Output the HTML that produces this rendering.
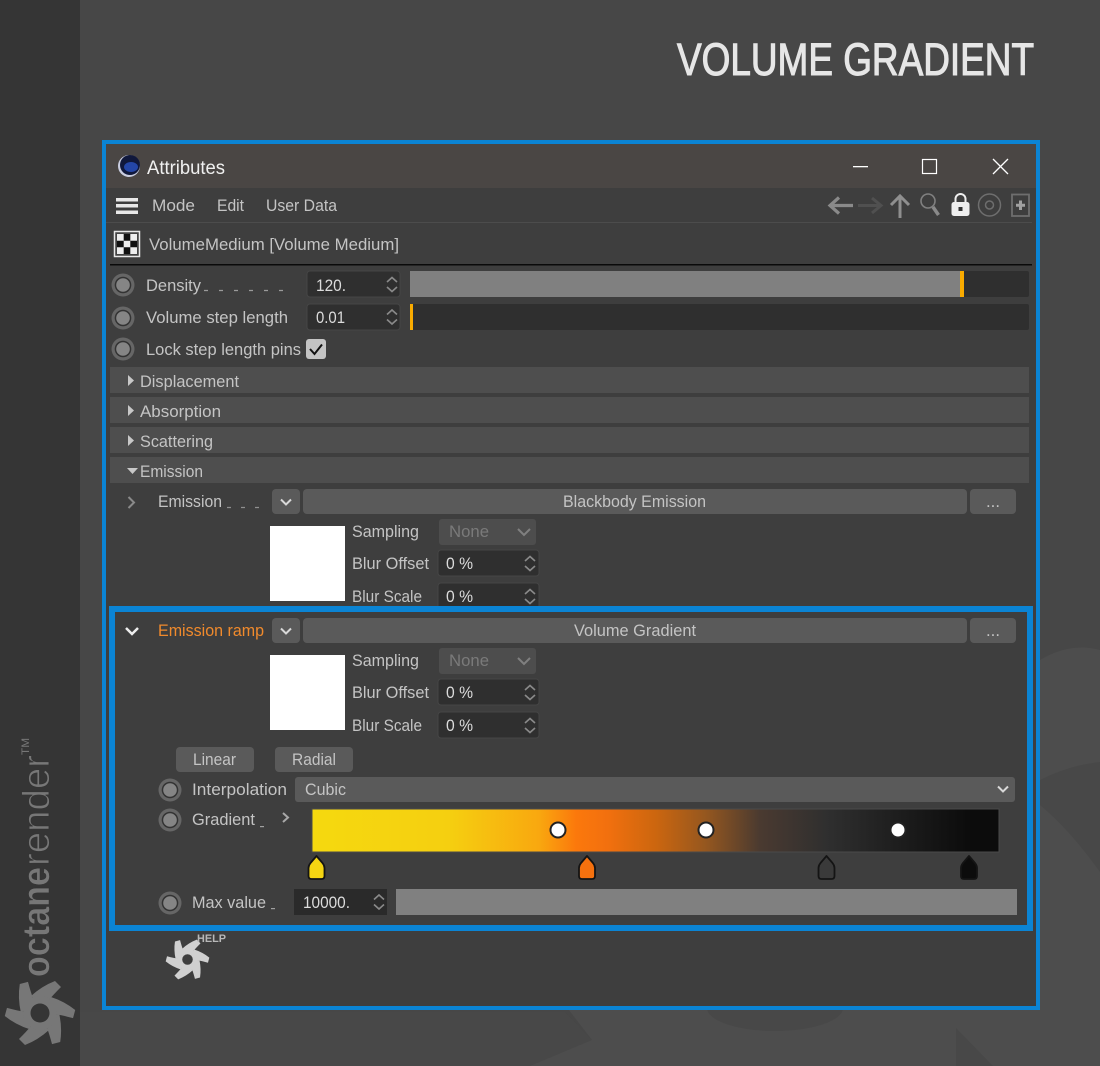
<!DOCTYPE html>
<html><head><meta charset="utf-8"><title>Volume Gradient</title>
<style>
html,body{margin:0;padding:0;background:#484848}
svg{display:block;font-family:"Liberation Sans",sans-serif}
.t{font-size:17px;fill:#c4c4c4}
.w{font-size:17px;fill:#dcdcdc}
</style></head><body>
<svg xmlns="http://www.w3.org/2000/svg" width="1100" height="1066" viewBox="0 0 1100 1066">
<defs>
<linearGradient id="g" x1="0" x2="1" y1="0" y2="0">
<stop offset="0" stop-color="#f5d90f"/><stop offset=".2" stop-color="#f5cf10"/><stop offset=".33" stop-color="#f9a80f"/><stop offset=".385" stop-color="#fb780c"/><stop offset=".43" stop-color="#f2700e"/><stop offset=".5" stop-color="#cc660f"/><stop offset=".573" stop-color="#95571f"/><stop offset=".652" stop-color="#4a3a30"/><stop offset=".75" stop-color="#2f2f2f"/><stop offset=".955" stop-color="#0c0c0c"/><stop offset="1" stop-color="#0c0c0c"/>
</linearGradient>
<g id="pin"><circle r="11.5" fill="#666"/><circle r="8.3" fill="#333"/><circle r="6.800" fill="#858585"/></g>
<g id="spin" fill="none" stroke="#8a8a8a" stroke-width="1.600"><path d="M-5 -2.500L0 -7L5 -2.500M-5 2.500L0 7L5 2.500"/></g>
<path id="chev" d="M-5 -2.500L0 2.500L5 -2.500" fill="none" stroke="#d8d8d8" stroke-width="2"/>
<path id="blade" d="M-9 -17Q2 -27 15 -32L21 -26Q13 -18 9 -13L0 -10Z"/>
<g id="logo"><use href="#blade"/><use href="#blade" transform="rotate(60)"/><use href="#blade" transform="rotate(120)"/><use href="#blade" transform="rotate(180)"/><use href="#blade" transform="rotate(240)"/><use href="#blade" transform="rotate(300)"/><circle r="17"/></g>
<path id="hd" d="M0 0L6 7Q8 9.500 8 12V20Q8 23 5 23H-5Q-8 23-8 20V12Q-8 9.500-6 7Z" stroke-linejoin="round"/>
</defs>

<!-- background -->
<rect width="1100" height="1066" fill="#474747"/>
<path d="M1040 660Q1070 642 1100 650V1066H80V1040H530L592 1040L565 1005H1040Z" fill="#4d4d4d"/>
<path d="M80 1012H565L592 1040L530 1066H80Z" fill="#484848"/>
<ellipse cx="775" cy="1008" rx="68" ry="23" fill="#484848"/>
<path d="M956 1028L993 1066H956Z" fill="#484848"/>
<path d="M1040 780Q1070 765 1100 762V872Q1070 830 1040 805Z" fill="#484848"/>
<rect width="80" height="1066" fill="#353535"/>

<!-- side logo -->
<g transform="translate(49 977) rotate(-90)">
<text font-size="38" font-weight="700" fill="#777" stroke="#353535" stroke-width=".5" textLength="110" lengthAdjust="spacingAndGlyphs">octane</text>
<text x="111" font-size="38" fill="#777" stroke="#353535" stroke-width=".9" textLength="111" lengthAdjust="spacingAndGlyphs">render</text>
<text x="222" y="-20" font-size="11" fill="#777" textLength="17" lengthAdjust="spacingAndGlyphs">TM</text>
</g>
<g transform="translate(40 1013)" fill="#777"><use href="#logo"/><circle r="9.500" fill="#353535"/></g>

<text x="677" y="75" font-size="45" fill="#e6e6e6" stroke="#e6e6e6" stroke-width="1.100" textLength="357" lengthAdjust="spacingAndGlyphs">VOLUME GRADIENT</text>

<!-- main frame -->
<rect x="102" y="140" width="938" height="870" fill="#0b84d4"/>
<rect x="106" y="144" width="930" height="862" fill="#3e3e3e"/>
<rect x="106" y="144" width="930" height="44" fill="#4a4644"/>
<rect x="106" y="222" width="926" height="1" fill="#4c4c4c"/>
<rect x="110" y="264" width="922" height="1.500" fill="#0a0a0a"/>

<!-- title bar -->
<circle cx="129" cy="166" r="11" fill="#c9cde0"/>
<circle cx="130" cy="165" r="10" fill="#10183c"/>
<ellipse cx="131" cy="167" rx="7" ry="5" fill="#2446a8"/>
<text x="147" y="174" font-size="19" fill="#f0f0f0" textLength="78" lengthAdjust="spacingAndGlyphs">Attributes</text>
<rect x="853" y="166" width="15" height="1.300" fill="#fff"/>
<rect x="922.500" y="159.500" width="14" height="14" fill="none" stroke="#fff" stroke-width="1.200"/>
<path d="M993 159L1008 174M1008 159L993 174" stroke="#fff" stroke-width="1.300" fill="none"/>

<!-- menu -->
<rect x="116" y="198" width="22" height="3.500" fill="#e8e8e8"/><rect x="116" y="204" width="22" height="3.500" fill="#e8e8e8"/><rect x="116" y="210.500" width="22" height="3.500" fill="#e8e8e8"/>
<text class="t" x="152" y="211" textLength="43" lengthAdjust="spacingAndGlyphs">Mode</text>
<text class="t" x="217" y="211" textLength="27" lengthAdjust="spacingAndGlyphs">Edit</text>
<text class="t" x="266" y="211" textLength="71" lengthAdjust="spacingAndGlyphs">User Data</text>

<!-- toolbar icons -->
<path d="M853 205.500H830M839 197.500L830 205.500L839 213.500" fill="none" stroke="#8a8a8a" stroke-width="3.200"/>
<path d="M858 205.500H880M872 198L881 205.500L872 213" fill="none" stroke="#505050" stroke-width="3"/>
<path d="M900 218V196M891 205L900 196L909 205" fill="none" stroke="#8f8f8f" stroke-width="3"/>
<circle cx="928" cy="201" r="7" fill="none" stroke="#808080" stroke-width="1.600"/><path d="M933 207L938.500 215" stroke="#8a8a8a" stroke-width="3.500"/>
<path d="M955.500 203V199A5 5 0 0 1 965.500 199V203" fill="none" stroke="#eee" stroke-width="2"/><rect x="951.500" y="202" width="18" height="14" rx="2.500" fill="#eee"/><rect x="958.500" y="207" width="4" height="4" fill="#333"/>
<circle cx="989.500" cy="205" r="11" fill="none" stroke="#6e6e6e" stroke-width="1.500"/><circle cx="989.500" cy="205" r="4" fill="none" stroke="#6e6e6e" stroke-width="1.500"/>
<rect x="1012" y="194.500" width="17" height="21.500" fill="none" stroke="#6e6e6e" stroke-width="1.800"/><path d="M1020.500 200.500V210M1016 205.300H1025" stroke="#a0a0a0" stroke-width="3"/>

<!-- object row -->
<rect x="114.500" y="231.500" width="25" height="25" fill="#444" stroke="#e8e8e8" stroke-width="1.500"/><rect x="117" y="234" width="20" height="20" fill="#eee"/>
<path d="M123.700 234h6.600v6.700h-6.600zM117 240.700h6.700v6.600h-6.700zM130.300 240.700h6.700v6.600h-6.700zM123.700 247.300h6.600v6.700h-6.600z" fill="#111"/>
<text class="t" x="149" y="250" textLength="250" lengthAdjust="spacingAndGlyphs">VolumeMedium [Volume Medium]</text>

<!-- density etc -->
<use href="#pin" x="123" y="285"/><use href="#pin" x="123" y="318"/><use href="#pin" x="123" y="349"/>
<text class="t" x="146" y="291" textLength="55" lengthAdjust="spacingAndGlyphs">Density</text>
<path d="M204 290.500H294" stroke="#9a9a9a" stroke-width="1.200" stroke-dasharray="4 11"/>
<text class="t" x="146" y="323" textLength="142" lengthAdjust="spacingAndGlyphs">Volume step length</text>
<text class="t" x="146" y="355" textLength="155" lengthAdjust="spacingAndGlyphs">Lock step length pins</text>
<rect x="307" y="271" width="93" height="26" rx="3" fill="#2f2f2f" stroke="#464646"/>
<rect x="307" y="304" width="93" height="26" rx="3" fill="#2f2f2f" stroke="#464646"/>
<text class="w" x="316" y="291" textLength="30" lengthAdjust="spacingAndGlyphs">120.</text>
<text class="w" x="316" y="323" textLength="29" lengthAdjust="spacingAndGlyphs">0.01</text>
<use href="#spin" x="392" y="284.500"/><use href="#spin" x="392" y="317"/>
<rect x="410" y="271" width="619" height="26" rx="2" fill="#2f2f2f"/><rect x="410" y="271" width="550" height="26" fill="#808080"/><rect x="960" y="271" width="4" height="26" fill="#f9ab00"/>
<rect x="410" y="304" width="619" height="26" rx="2" fill="#2f2f2f"/><rect x="410" y="304" width="3" height="26" fill="#f9ab00"/>
<rect x="306" y="339" width="20" height="20" rx="3" fill="#c4c4c4"/><path d="M310 349L314.500 354L322 344.500" fill="none" stroke="#111" stroke-width="2"/>

<!-- sections -->
<rect x="110" y="367" width="919" height="26" fill="#4e4e4e"/><rect x="110" y="397" width="919" height="26" fill="#4e4e4e"/><rect x="110" y="427" width="919" height="26" fill="#4e4e4e"/><rect x="110" y="457" width="919" height="26" fill="#4e4e4e"/>
<path d="M128 375L134 380.500L128 386ZM128 405L134 410.500L128 416ZM128 435L134 440.500L128 446Z" fill="#c8c8c8"/>
<path d="M127 468H138L132.500 474Z" fill="#c8c8c8"/>
<text class="t" x="140" y="387" textLength="99" lengthAdjust="spacingAndGlyphs">Displacement</text>
<text class="t" x="140" y="417" textLength="81" lengthAdjust="spacingAndGlyphs">Absorption</text>
<text class="t" x="140" y="447" textLength="73" lengthAdjust="spacingAndGlyphs">Scattering</text>
<text class="t" x="140" y="477" textLength="63" lengthAdjust="spacingAndGlyphs">Emission</text>

<!-- emission -->
<path d="M128.500 497L134 502.500L128.500 508" fill="none" stroke="#8a8a8a" stroke-width="2"/>
<text class="t" x="158" y="507" textLength="64" lengthAdjust="spacingAndGlyphs">Emission</text>
<path d="M227 507.500H262" stroke="#8f8f8f" stroke-width="1.200" stroke-dasharray="4 10"/>
<rect x="272" y="489" width="28" height="25" rx="4" fill="#5a5a5a"/><use href="#chev" x="286" y="502"/>
<rect x="303" y="489" width="664" height="25" rx="4" fill="#5a5a5a"/>
<rect x="970" y="489" width="46" height="25" rx="4" fill="#5a5a5a"/>
<text class="t" x="563" y="507" textLength="143" lengthAdjust="spacingAndGlyphs">Blackbody Emission</text>
<text class="t" x="986" y="507" textLength="14" lengthAdjust="spacingAndGlyphs">...</text>
<rect x="270" y="526" width="75" height="75" fill="#fff"/>
<text class="t" x="352" y="537" textLength="67" lengthAdjust="spacingAndGlyphs">Sampling</text>
<rect x="439" y="519" width="97" height="26" rx="3" fill="#4d4d4d"/>
<text class="t" x="449" y="537" style="fill:#7a7a7a" textLength="40" lengthAdjust="spacingAndGlyphs">None</text>
<path d="M518 529L524 535L530 529" fill="none" stroke="#808080" stroke-width="2"/>
<text class="t" x="352" y="569" textLength="77" lengthAdjust="spacingAndGlyphs">Blur Offset</text>
<rect x="438" y="550" width="101" height="26" rx="3" fill="#2f2f2f" stroke="#464646"/>
<text class="w" x="446" y="569" textLength="27" lengthAdjust="spacingAndGlyphs">0 %</text>
<use href="#spin" x="530" y="563.500"/>
<text class="t" x="352" y="602" textLength="70" lengthAdjust="spacingAndGlyphs">Blur Scale</text>
<rect x="438" y="583" width="101" height="26" rx="3" fill="#2f2f2f" stroke="#464646"/>
<text class="w" x="446" y="602" textLength="27" lengthAdjust="spacingAndGlyphs">0 %</text>
<use href="#spin" x="530" y="596.500"/>

<!-- inner frame -->
<rect x="112" y="609" width="918" height="319" fill="#3e3e3e" stroke="#0b84d4" stroke-width="6"/>

<!-- ramp -->
<path d="M126 628L132 634L138 628" fill="none" stroke="#eee" stroke-width="2.500"/>
<text x="158" y="636" font-size="17" fill="#f08a2c" textLength="106" lengthAdjust="spacingAndGlyphs">Emission ramp</text>
<rect x="272" y="618" width="28" height="25" rx="4" fill="#5a5a5a"/><use href="#chev" x="286" y="631"/>
<rect x="303" y="618" width="664" height="25" rx="4" fill="#5a5a5a"/>
<rect x="970" y="618" width="46" height="25" rx="4" fill="#5a5a5a"/>
<text class="t" x="574" y="636" textLength="122" lengthAdjust="spacingAndGlyphs">Volume Gradient</text>
<text class="t" x="986" y="636" textLength="14" lengthAdjust="spacingAndGlyphs">...</text>
<rect x="270" y="655" width="75" height="75" fill="#fff"/>
<text class="t" x="352" y="666" textLength="67" lengthAdjust="spacingAndGlyphs">Sampling</text>
<rect x="439" y="648" width="97" height="26" rx="3" fill="#4d4d4d"/>
<text class="t" x="449" y="666" style="fill:#7a7a7a" textLength="40" lengthAdjust="spacingAndGlyphs">None</text>
<path d="M518 658L524 664L530 658" fill="none" stroke="#808080" stroke-width="2"/>
<text class="t" x="352" y="698" textLength="77" lengthAdjust="spacingAndGlyphs">Blur Offset</text>
<rect x="438" y="679" width="101" height="26" rx="3" fill="#2f2f2f" stroke="#464646"/>
<text class="w" x="446" y="698" textLength="27" lengthAdjust="spacingAndGlyphs">0 %</text>
<use href="#spin" x="530" y="692.500"/>
<text class="t" x="352" y="731" textLength="70" lengthAdjust="spacingAndGlyphs">Blur Scale</text>
<rect x="438" y="712" width="101" height="26" rx="3" fill="#2f2f2f" stroke="#464646"/>
<text class="w" x="446" y="731" textLength="27" lengthAdjust="spacingAndGlyphs">0 %</text>
<use href="#spin" x="530" y="725.500"/>

<rect x="176" y="747" width="78" height="25" rx="4" fill="#5a5a5a"/><rect x="275" y="747" width="78" height="25" rx="4" fill="#5a5a5a"/>
<text class="t" x="193" y="765" textLength="43" lengthAdjust="spacingAndGlyphs">Linear</text>
<text class="t" x="292" y="765" textLength="44" lengthAdjust="spacingAndGlyphs">Radial</text>

<use href="#pin" x="170" y="790"/><use href="#pin" x="170" y="820"/><use href="#pin" x="170" y="903"/>
<text class="t" x="192" y="795" textLength="95" lengthAdjust="spacingAndGlyphs">Interpolation</text>
<rect x="295" y="777" width="720" height="25" rx="3" fill="#5a5a5a"/>
<text class="t" x="305" y="795" textLength="41" lengthAdjust="spacingAndGlyphs">Cubic</text>
<use href="#chev" x="1003" y="789"/>
<text class="t" x="192" y="825" textLength="63" lengthAdjust="spacingAndGlyphs">Gradient</text>
<rect x="260" y="826" width="4" height="1.200" fill="#a0a0a0"/>
<path d="M283 813L288 817.500L283 822" fill="none" stroke="#a8a8a8" stroke-width="2"/>
<rect x="312" y="809" width="687" height="43" fill="url(#g)" stroke="#4a4a4a" stroke-width="1"/>
<circle cx="558" cy="830" r="7.500" fill="#fff" stroke="#222" stroke-width="2"/>
<circle cx="706" cy="830" r="7.500" fill="#fff" stroke="#222" stroke-width="2"/>
<circle cx="898" cy="830" r="7.500" fill="#fff" stroke="#222" stroke-width="2"/>
<g stroke="#141414" stroke-width="1.800"><use href="#hd" x="316.500" y="856" fill="#f5d512"/><use href="#hd" x="587" y="856" fill="#f5710e"/><use href="#hd" x="826.500" y="856" fill="#3a3a3a"/><use href="#hd" x="969" y="856" fill="#0c0c0c"/></g>

<text class="t" x="192" y="908" textLength="74" lengthAdjust="spacingAndGlyphs">Max value</text>
<rect x="271" y="908" width="4" height="1.200" fill="#a0a0a0"/>
<rect x="294" y="889" width="93" height="26" fill="#2a2a2a"/>
<text class="w" x="303" y="908" textLength="47" lengthAdjust="spacingAndGlyphs">10000.</text>
<use href="#spin" x="379" y="902"/>
<rect x="396" y="889" width="621" height="26" fill="#808080"/>

<!-- help -->
<g transform="translate(187.500 959.500) scale(.62)" fill="#d0d0d0"><use href="#logo"/><circle r="8.500" fill="#3e3e3e"/></g>
<text x="197" y="942" font-size="11" font-weight="700" fill="#b8b8b8" textLength="29" lengthAdjust="spacingAndGlyphs">HELP</text>
</svg>
</body></html>
